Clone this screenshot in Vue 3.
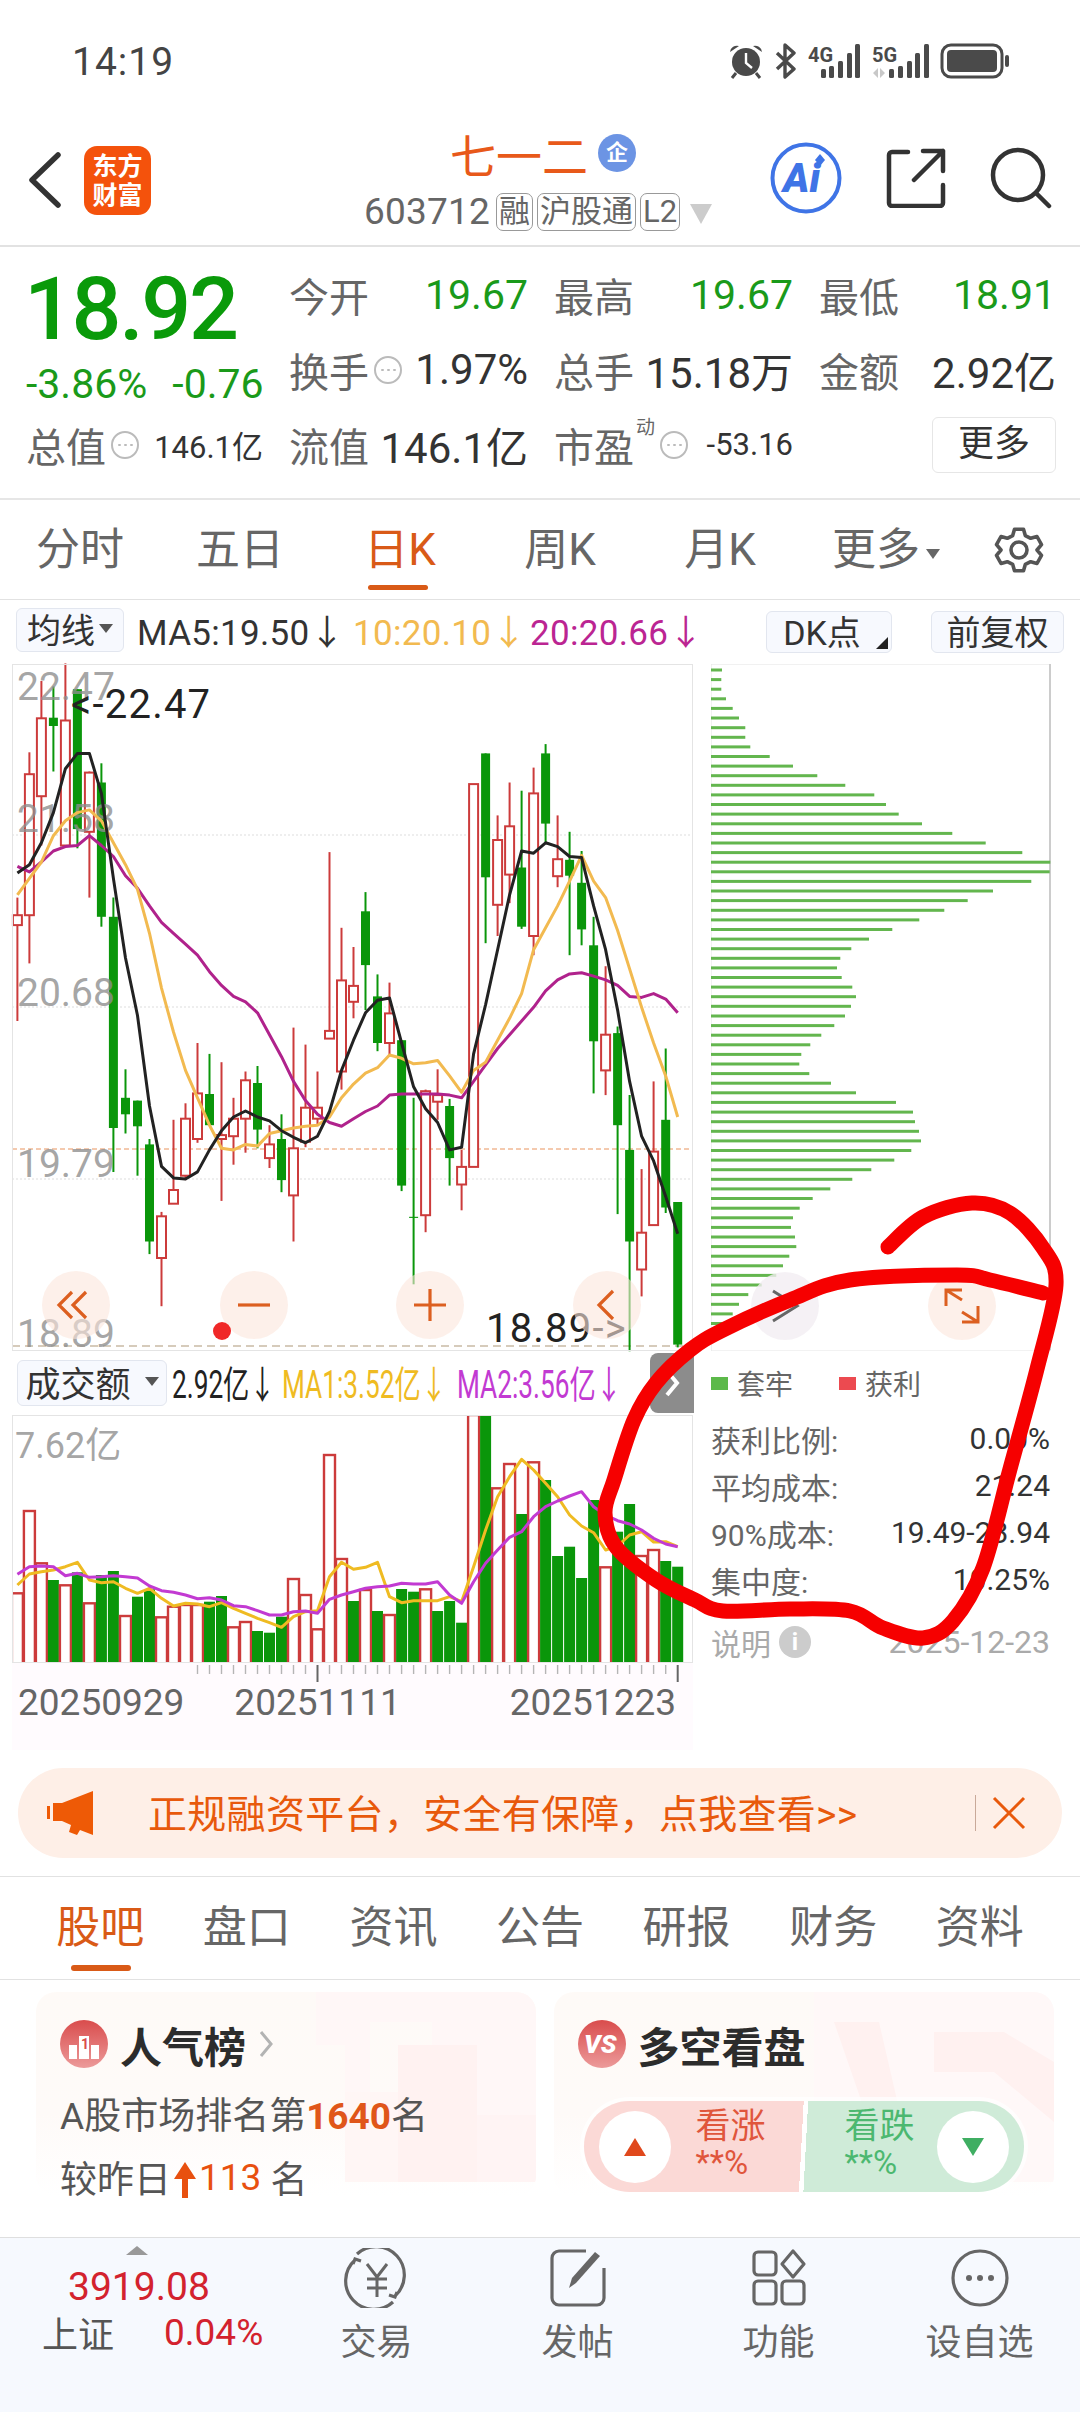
<template>
  <div class="page">
    <!-- status bar -->
    <div class="status">
      <span class="clock">14:19</span>
      <div class="status-icons">
        <svg width="36" height="36" viewBox="0 0 36 36">
          <circle cx="18" cy="19" r="14" fill="#4a4a4a" />
          <path d="M18 10v10l6 5" fill="none" stroke="#fff" stroke-width="2.4" />
          <path d="M2 9a7 7 0 0 1 9-6zM34 9a7 7 0 0 0-9-6z" fill="#4a4a4a" />
          <path d="M8 30l-4 5M28 30l4 5" stroke="#4a4a4a" stroke-width="3" />
        </svg>
        <svg width="24" height="36" viewBox="0 0 24 36">
          <path d="M3 10l17 16-9 8V2l9 8L3 26" fill="none" stroke="#4a4a4a" stroke-width="3.4" stroke-linejoin="round" />
        </svg>
        <svg width="54" height="36" viewBox="0 0 54 36">
          <text x="0" y="19" class="net">4G</text>
          <rect x="13" y="26" width="5" height="9" rx="1.5" fill="#4a4a4a" />
          <rect x="21" y="23" width="5" height="12" rx="1.5" fill="#4a4a4a" />
          <rect x="30" y="18" width="5" height="17" rx="1.5" fill="#4a4a4a" />
          <rect x="39" y="10" width="5" height="25" rx="1.5" fill="#4a4a4a" />
          <rect x="47" y="1" width="5" height="34" rx="1.5" fill="#4a4a4a" />
        </svg>
        <svg width="58" height="36" viewBox="0 0 58 36">
          <text x="0" y="19" class="net">5G</text>
          <path d="M1 30l5-5v10zM8 25l5 5-5 5z" fill="#c8c8c8" />
          <rect x="17" y="26" width="5" height="9" rx="1.5" fill="#4a4a4a" />
          <rect x="26" y="23" width="5" height="12" rx="1.5" fill="#4a4a4a" />
          <rect x="35" y="18" width="5" height="17" rx="1.5" fill="#4a4a4a" />
          <rect x="43" y="10" width="5" height="25" rx="1.5" fill="#4a4a4a" />
          <rect x="52" y="1" width="5" height="34" rx="1.5" fill="#4a4a4a" />
        </svg>
        <svg width="70" height="36" viewBox="0 0 70 36">
          <rect x="2" y="2" width="60" height="32" rx="9" fill="none" stroke="#4a4a4a" stroke-width="3" />
          <rect x="7" y="7" width="50" height="22" rx="4" fill="#4a4a4a" />
          <rect x="65" y="12" width="4" height="12" rx="2" fill="#4a4a4a" />
        </svg>
      </div>
    </div>

    <!-- title bar -->
    <div class="topbar">
      <svg class="back" width="34" height="56" viewBox="0 0 34 56">
        <path d="M30 3L4 28l26 25" fill="none" stroke="#333" stroke-width="5.5" stroke-linecap="round" stroke-linejoin="round" />
      </svg>
      <div class="logo"><span>东方</span><span>财富</span></div>
      <div class="stock">
        <div class="stock-name">
          <span>七一二</span><i class="qi">企</i>
        </div>
        <div class="stock-code">
          <span class="code">603712</span>
          <span class="tag">融</span>
          <span class="tag">沪股通</span>
          <span class="tag">L2</span>
          <b class="drop"></b>
        </div>
      </div>
      <div class="top-actions">
        <svg width="72" height="72" viewBox="0 0 72 72">
          <circle cx="36" cy="36" r="33.5" fill="none" stroke="#3f74e6" stroke-width="4" />
          <text x="13" y="50" class="ai">Ai</text>
          <path d="M50 12l5 6-5 6-5-6z" fill="#3f74e6" />
        </svg>
        <svg width="60" height="60" viewBox="0 0 60 60">
          <path d="M22 4H6a3 3 0 0 0-3 3v48a3 3 0 0 0 3 3h48a3 3 0 0 0 3-3V37M37 3h20v20M57 3L28 32" fill="none" stroke="#333" stroke-width="4.5" stroke-linecap="round" stroke-linejoin="round" />
        </svg>
        <svg width="62" height="62" viewBox="0 0 62 62">
          <circle cx="28" cy="28" r="25" fill="none" stroke="#333" stroke-width="4.5" />
          <path d="M46 46l13 13" stroke="#333" stroke-width="4.5" stroke-linecap="round" />
        </svg>
      </div>
    </div>

    <!-- quote -->
    <div class="quote">
      <div class="price-box">
        <div class="price">18.92</div>
        <div class="change"><span>-3.86%</span><span>-0.76</span></div>
      </div>
      <div class="cell"><span class="lab">今开</span><span class="val down">19.67</span></div>
      <div class="cell"><span class="lab">最高</span><span class="val down">19.67</span></div>
      <div class="cell"><span class="lab">最低</span><span class="val down">18.91</span></div>
      <div class="cell">
        <span class="lab">换手<svg class="dots" viewBox="0 0 30 30"><circle cx="15" cy="15" r="13" /><path d="M9 15h1M15 15h1M21 15h1" /></svg></span>
        <span class="val big">1.97%</span>
      </div>
      <div class="cell"><span class="lab">总手</span><span class="val big">15.18万</span></div>
      <div class="cell"><span class="lab">金额</span><span class="val big">2.92亿</span></div>
      <div class="cell">
        <span class="lab">总值<svg class="dots" viewBox="0 0 30 30"><circle cx="15" cy="15" r="13" /><path d="M9 15h1M15 15h1M21 15h1" /></svg></span>
        <span class="val small">146.1亿</span>
      </div>
      <div class="cell"><span class="lab">流值</span><span class="val big">146.1亿</span></div>
      <div class="cell">
        <span class="lab">市盈<sup>动</sup><svg class="dots" viewBox="0 0 30 30"><circle cx="15" cy="15" r="13" /><path d="M9 15h1M15 15h1M21 15h1" /></svg></span>
        <span class="val small">-53.16</span>
      </div>
      <div class="cell right"><span class="more-btn">更多</span></div>
    </div>

    <!-- period tabs -->
    <div class="periods">
      <span v-for="p in periods" :key="p" class="period" :class="{ on: p === '日K' }">{{ p }}</span>
      <span class="period more">更多<b class="caret"></b></span>
      <svg class="gear" width="52" height="52" viewBox="0 0 52 52">
        <path d="M21 3h10l2 7 6 3 7-2 5 9-5 6 5 6-5 9-7-2-6 3-2 7H21l-2-7-6-3-7 2-5-9 5-6-5-6 5-9 7 2 6-3z" transform="translate(2.6 2.6) scale(.9)" fill="none" stroke="#555" stroke-width="4" stroke-linejoin="round" />
        <circle cx="26" cy="26" r="8" fill="none" stroke="#555" stroke-width="3.6" />
      </svg>
    </div>

    <!-- indicator row -->
    <div class="indicators">
      <span class="chip wide">均线<b class="tri"></b></span>
      <span class="ma ma5">MA5:19.50↓</span>
      <span class="ma ma10">10:20.10↓</span>
      <span class="ma ma20">20:20.66↓</span>
      <span class="chip dk">DK点<b class="corner"></b></span>
      <span class="chip fq">前复权</span>
    </div>

    <!-- charts -->
    <div class="charts">
      <div class="left-col">
        <svg class="kline" width="681" height="687" viewBox="0 0 681 687">
          <line v-for="g in grids" :key="g" x1="0" x2="681" :y1="g" :y2="g" stroke="#ddd" stroke-dasharray="2 2" />
          <line x1="0" x2="681" y1="485" y2="485" stroke="#e9945f" stroke-dasharray="5 3" />
          <line x1="0" x2="681" y1="682" y2="682" stroke="#c9bba5" stroke-dasharray="8 5" stroke-width="1.5" />
          <g v-for="c in candles" :key="c.x">
            <line :x1="c.x" :x2="c.x" :y1="c.wt" :y2="c.wb" :stroke="c.color" stroke-width="2" />
            <rect :x="c.x - 4.5" :y="c.bt" width="9" :height="c.bh" :fill="c.up ? '#fff' : c.color" :stroke="c.color" :stroke-width="c.up ? 2 : 0" />
          </g>
          <text v-for="l in axisLabels" :key="l.t" x="5" :y="l.y" class="axis-txt">{{ l.t }}</text>
          <polyline :points="ma20" fill="none" stroke="#b0228c" stroke-width="3" stroke-linejoin="round" />
          <polyline :points="ma10" fill="none" stroke="#f2ba50" stroke-width="3" stroke-linejoin="round" />
          <polyline :points="ma5" fill="none" stroke="#222" stroke-width="3" stroke-linejoin="round" />
          <text x="59" y="54" class="mark-txt">&lt;-22.47</text>
          <text x="474" y="678" class="mark-txt">18.89-&gt;</text>
          <g fill="#fbe6dc" fill-opacity=".6">
            <circle cx="64" cy="641" r="34" />
            <circle cx="242" cy="641" r="34" />
            <circle cx="418" cy="641" r="34" />
            <circle cx="595" cy="641" r="34" />
          </g>
          <g fill="none" stroke="#dc5f20" stroke-width="3.2">
            <path d="M60 628l-13 13 13 13M74 628l-13 13 13 13" />
            <path d="M226 641h32" />
            <path d="M402 641h32M418 625v32" />
            <path d="M601 627l-14 14 14 14" />
          </g>
          <circle cx="210" cy="667" r="9" fill="#f02828" />
        </svg>

        <div class="vol-head">
          <span class="chip vol-chip">成交额<b class="tri"></b></span>
          <span class="vol-val w1">2.92亿↓</span>
          <span class="vol-val w2 ma1">MA1:3.52亿↓</span>
          <span class="vol-val w2 ma2">MA2:3.56亿↓</span>
          <span class="handle">
            <svg width="16" height="30" viewBox="0 0 16 30"><path d="M3 3l10 12L3 27" fill="none" stroke="#fff" stroke-width="4" /></svg>
          </span>
        </div>

        <svg class="volume" width="681" height="248" viewBox="0 0 681 248">
          <text x="3" y="43" class="axis-txt vol-txt">7.62亿</text>
          <rect v-for="b in volBars" :key="b.x" :x="b.x - 5.5" :y="b.y" width="11" :height="b.h" :fill="b.up ? '#fff' : '#0a960a'" :stroke="b.up ? '#cc3b3b' : 'none'" :stroke-width="b.up ? 2.4 : 0" />
          <polyline :points="volMa1" fill="none" stroke="#efbb22" stroke-width="3" stroke-linejoin="round" />
          <polyline :points="volMa2" fill="none" stroke="#c23ad2" stroke-width="3" stroke-linejoin="round" />
        </svg>

        <div class="date-axis">
          <svg width="681" height="20" viewBox="0 0 681 20">
            <line v-for="t in ticks" :key="t.x" :x1="t.x" :x2="t.x" y1="2" :y2="t.big ? 19 : 11" :stroke="t.big ? '#666' : '#b5b5b5'" :stroke-width="t.big ? 2 : 1.4" />
          </svg>
          <div class="dates"><span>20250929</span><span>20251111</span><span>20251223</span></div>
        </div>
      </div>

      <div class="right-col">
        <svg class="chips" width="340" height="687" viewBox="0 0 340 687">
          <rect x="0" y="0" width="339" height="687" fill="none" stroke="#e4e4e4" />
          <line x1="339" x2="339" y1="0" y2="686" stroke="#ccc" stroke-width="2" />
          <rect v-for="b in chipBars" :key="b.y" x="0" :y="b.y" :width="b.w" height="3" fill="#63b64e" />
          <circle cx="74" cy="642" r="34" fill="#f3eef3" fill-opacity=".8" />
          <circle cx="251" cy="642" r="34" fill="#fbe6dc" fill-opacity=".6" />
          <path d="M62 627l24 15-24 15" fill="none" stroke="#666" stroke-width="3" />
          <path d="M235 642v-16h16M235 626l16 10M267 642v16h-16M267 658l-16-10" fill="none" stroke="#dc5f20" stroke-width="3" />
        </svg>
        <div class="legend">
          <span class="sq green"></span><span class="lg-t">套牢</span>
          <span class="sq red"></span><span class="lg-t">获利</span>
        </div>
        <div v-for="s in stats" :key="s[0]" class="stat"><span>{{ s[0] }}</span><em>{{ s[1] }}</em></div>
        <div class="stat note">
          <span>说明<i class="info">i</i></span><em>2025-12-23</em>
        </div>
      </div>
    </div>

    <!-- banner -->
    <div class="banner">
      <svg width="46" height="44" viewBox="0 0 46 44">
        <path d="M0 15h3v13H0zM6 12h9L46 0v44l-13-5-3 5-8-3 2-7-9-4H6z" fill="#ee5a06" />
      </svg>
      <span class="banner-text">正规融资平台，安全有保障，点我查看&gt;&gt;</span>
      <i class="sep"></i>
      <svg width="34" height="34" viewBox="0 0 34 34"><path d="M2 2l30 30M32 2L2 32" stroke="#e8590c" stroke-width="3" /></svg>
    </div>

    <!-- news tabs -->
    <div class="news-tabs">
      <span v-for="(t, i) in newsTabs" :key="t" class="news-tab" :class="{ on: i === 0 }">{{ t }}</span>
    </div>

    <!-- cards -->
    <div class="cards">
      <div class="card">
        <svg class="card-bg" width="500" height="204" viewBox="0 0 500 204">
          <path d="M280 0h220v190h-59V123h-45V30h-62v70h-25V53h-29z" fill="#fff7f7" />
          <rect x="362" y="53" width="79" height="137" fill="#fff2f1" />
          <rect x="309" y="100" width="53" height="90" fill="#fff6f5" />
          <rect x="441" y="123" width="59" height="67" fill="#fff4f4" />
        </svg>
        <div class="card-title">
          <svg width="48" height="48" viewBox="0 0 48 48">
            <defs>
              <linearGradient id="ig" x1="0" y1="0" x2="0" y2="1"><stop offset="0" stop-color="#d94c4c" /><stop offset="1" stop-color="#ec9a9a" /></linearGradient>
            </defs>
            <circle cx="24" cy="24" r="24" fill="url(#ig)" />
            <path d="M9 25h8v14H9zM19 16h10v23H19zM31 25h8v14h-8z" fill="#fff" />
            <text x="21" y="29" class="rank">1</text>
          </svg>
          <span>人气榜</span>
          <svg width="16" height="32" viewBox="0 0 16 32"><path d="M3 4l10 12L3 28" fill="none" stroke="#b3b3b3" stroke-width="3" /></svg>
        </div>
        <div class="card-line line1">A股市场排名第<b>1640</b>名</div>
        <div class="card-line line2">
          较昨日<svg width="24" height="36" viewBox="0 0 24 36"><path d="M12 0l11 17h-8v19H9V17H1z" fill="#e8500f" /></svg><b class="thin">113</b>&nbsp;名
        </div>
      </div>
      <div class="card">
        <svg class="card-bg" width="500" height="204" viewBox="0 0 500 204">
          <rect x="260" y="0" width="240" height="190" fill="#fff8f8" />
          <path d="M280 30h45l30 130h-30zM380 40h70l50 30v60l-60-50h-60z" fill="#fff1f0" />
        </svg>
        <div class="card-title">
          <svg width="48" height="48" viewBox="0 0 48 48">
            <circle cx="24" cy="24" r="24" fill="url(#ig)" />
            <text x="6" y="33" class="vs">VS</text>
          </svg>
          <span>多空看盘</span>
        </div>
        <div class="vote">
          <div class="vote-up">
            <span class="disc"><b class="arrow-up"></b></span>
            <div class="vote-txt"><span>看涨</span><small>**%</small></div>
          </div>
          <div class="vote-down">
            <div class="vote-txt"><span>看跌</span><small>**%</small></div>
            <span class="disc"><b class="arrow-down"></b></span>
          </div>
        </div>
      </div>
    </div>

    <!-- bottom bar -->
    <div class="bottom">
      <div class="index">
        <b class="index-tri"></b>
        <div class="index-num">3919.08</div>
        <div class="index-row"><span>上证</span><em>0.04%</em></div>
      </div>
      <div class="tool">
        <svg width="68" height="60" viewBox="0 0 68 60">
          <path d="M14 6A28 28 0 0 1 52 48M54 44l-2 5-6-2M50 54A28 28 0 0 1 12 12M10 16l2-5 6 2" fill="none" stroke="#666" stroke-width="3.2" />
          <path d="M24 16l10 13 10-13M34 29v20M24 31h20M24 40h20" fill="none" stroke="#666" stroke-width="3" />
        </svg>
        <span>交易</span>
      </div>
      <div class="tool">
        <svg width="60" height="60" viewBox="0 0 60 60">
          <path d="M38 3H11a7 7 0 0 0-7 7v40a7 7 0 0 0 7 7h38a7 7 0 0 0 7-7V20" fill="none" stroke="#666" stroke-width="3.2" />
          <path d="M21 40l3-10L47 4l5 4-24 27z" fill="#666" />
        </svg>
        <span>发帖</span>
      </div>
      <div class="tool">
        <svg width="60" height="60" viewBox="0 0 60 60">
          <g fill="none" stroke="#666" stroke-width="3.2">
            <rect x="5" y="4" width="22" height="23" rx="4" />
            <rect x="5" y="33" width="22" height="23" rx="4" />
            <rect x="33" y="33" width="22" height="23" rx="4" />
            <path d="M44 3l11 13-11 13-11-13z" stroke-linejoin="round" />
          </g>
        </svg>
        <span>功能</span>
      </div>
      <div class="tool">
        <svg width="60" height="60" viewBox="0 0 60 60">
          <circle cx="30" cy="30" r="27" fill="none" stroke="#666" stroke-width="3.2" />
          <circle cx="19" cy="30" r="3" fill="#666" />
          <circle cx="30" cy="30" r="3" fill="#666" />
          <circle cx="41" cy="30" r="3" fill="#666" />
        </svg>
        <span>设自选</span>
      </div>
    </div>

    <!-- hand drawn mark on top of the screenshot -->
    <svg class="scribble" width="1080" height="2412" viewBox="0 0 1080 2412">
      <path :d="scribble" fill="none" stroke="#f60000" stroke-width="15" stroke-linecap="round" stroke-linejoin="round" />
    </svg>
  </div>
</template>

<script setup>
const periods = ['分时', '五日', '日K', '周K', '月K']
const newsTabs = ['股吧', '盘口', '资讯', '公告', '研报', '财务', '资料']
const stats = [
  ['获利比例:', '0.00%'],
  ['平均成本:', '21.24'],
  ['90%成本:', '19.49-23.94'],
  ['集中度:', '10.25%'],
]
const grids = [171, 343, 515]
const axisLabels = [
  { t: '22.47', y: 36 },
  { t: '21.58', y: 168 },
  { t: '20.68', y: 342 },
  { t: '19.79', y: 513 },
  { t: '18.89', y: 683 },
]

// sampled from the chart, x in slots, y in 1568-tall units
const rawCandles = [
  ['r',725,757,775,950],['r',460,500,757,845],['r',330,398,540,630],['g',340,397,412,495],
  ['r',298,402,630,632],['g',345,345,600,635],['r',495,497,605,725],['g',480,515,760,778],
  ['g',725,760,1145,1225],['g',1038,1090,1120,1155],['g',1095,1095,1142,1232],['g',1165,1175,1352,1375],
  ['r',1298,1306,1382,1470],['r',1130,1258,1283,1283],['r',1100,1128,1232,1240],['r',990,1082,1165,1172],
  ['g',1010,1083,1140,1140],['r',1025,1158,1165,1278],['r',1090,1128,1160,1212],['r',1042,1058,1128,1190],
  ['g',1032,1063,1148,1182],['r',1140,1175,1200,1218],['g',1120,1165,1240,1262],['r',962,1182,1268,1352],
  ['r',993,1108,1170,1180],['r',1042,1108,1128,1140],['r',642,968,982,982],['r',780,876,1042,1075],
  ['r',815,886,915,945],['g',715,750,848,930],['g',865,905,990,1005],['r',880,936,990,1015],
  ['g',985,985,1250,1260],['g',1090,1307,1309,1430],['r',1075,1078,1304,1335],['r',1038,1085,1097,1130],
  ['g',1092,1105,1200,1250],['r',1185,1216,1248,1295],['r',518,518,1216,1216],['g',462,462,688,808],
  ['r',575,620,738,795],['r',515,595,683,735],['g',530,670,778,782],['r',488,535,795,830],
  ['g',445,462,590,625],['r',575,655,686,706],['g',605,656,685,830],['g',640,698,783,812],
  ['g',760,812,987,1082],['r',850,975,1040,1085],['g',960,972,1140,1302],['g',1085,1185,1352,1552],
  ['r',1220,1336,1403,1452],['r',1060,1188,1322,1322],['g',1000,1130,1290,1300],['g',1280,1280,1540,1545],
]
const rawMa5 = [680,665,625,570,490,462,462,535,690,835,940,1105,1215,1236,1238,1225,1185,1150,1125,1114,1125,1132,1150,1162,1172,1160,1115,1040,985,935,912,908,990,1070,1110,1135,1185,1180,1010,920,820,720,640,644,625,632,650,652,740,820,930,1060,1160,1205,1270,1338]
const rawMa10 = [720,690,660,612,585,570,565,585,625,665,710,790,890,970,1040,1090,1140,1182,1185,1175,1178,1155,1150,1145,1142,1140,1125,1090,1065,1045,1035,1012,1018,1028,1026,1022,1050,1080,1040,1025,985,945,900,820,780,740,695,648,695,725,785,855,925,990,1050,1125]
const rawMa20 = [668,678,660,640,632,630,612,630,650,685,708,740,770,790,810,830,860,885,905,915,935,975,1015,1060,1095,1120,1135,1142,1128,1115,1105,1085,1083,1083,1083,1083,1085,1090,1060,1030,1000,975,950,925,895,875,864,862,868,875,885,905,907,900,910,935]

const slotX = (i) => (39 + i * 26.89) / 2.24 - 12
const kY = (v) => +(v / 1.8233 - 164).toFixed(1)
const line = (arr, fy) => arr.map((v, i) => `${slotX(i).toFixed(1)},${fy(v)}`).join(' ')

const candles = rawCandles.map((c, i) => ({
  x: +slotX(i).toFixed(1),
  up: c[0] === 'r',
  color: c[0] === 'r' ? '#cc3b3b' : '#0a960a',
  wt: kY(c[1]),
  bt: kY(c[2]),
  bh: Math.max(kY(c[3]) - kY(c[2]), 1),
  wb: kY(c[4]),
}))
const ma5 = line(rawMa5, kY)
const ma10 = line(rawMa10, kY)
const ma20 = line(rawMa20, kY)

// volume panel
const rawVol = [
  ['r',760],['r',513],['r',670],['g',720],['r',736],['g',697],['r',790],['g',705],['g',693],['r',828],
  ['g',770],['g',748],['r',832],['r',800],['r',795],['r',795],['g',785],['g',768],['r',862],['r',846],
  ['g',873],['g',878],['g',830],['r',717],['r',765],['r',868],['r',345],['r',657],['g',783],['r',750],
  ['g',813],['r',825],['g',747],['g',755],['r',748],['g',813],['g',783],['g',848],['r',225],['g',228],
  ['r',445],['r',372],['g',522],['r',367],['g',420],['g',648],['g',620],['g',714],['g',480],['r',682],
  ['g',575],['g',492],['r',648],['r',630],['g',663],['g',680],
]
const rawMa1 = [735,702,695,690,680,667,720,728,725,745,760,745,775,798,790,792,800,788,805,820,835,848,862,830,815,812,710,667,688,682,667,770,788,782,782,782,770,785,680,570,470,410,358,390,430,470,525,558,578,630,618,585,575,606,605,620]
const rawMa2 = [703,680,678,680,707,700,712,710,707,710,714,738,752,757,765,776,773,780,797,800,812,825,825,815,813,820,778,765,755,745,740,738,730,732,732,725,765,790,725,670,630,592,575,530,500,483,468,455,500,525,542,552,570,595,612,620]
const vY = (v) => +(v / 3 - 75).toFixed(1)
const volBars = rawVol.map((b, i) => ({
  x: +slotX(i).toFixed(1),
  up: b[0] === 'r',
  y: vY(b[1]),
  h: +(vY(970) - vY(b[1])).toFixed(1),
}))
const volMa1 = line(rawMa1, vY)
const volMa2 = line(rawMa2, vY)
const ticks = rawVol.map((_, i) => ({ x: +slotX(i).toFixed(1), big: i === 25 || i === 55 })).filter((t, i) => i >= 15)

// chip distribution, bar right ends
const rawChips = [95,93,93,107,127,146,165,165,180,238,308,381,465,552,587,625,695,786,886,996,1080,1078,1023,908,832,762,687,606,536,483,450,440,454,486,497,482,464,432,393,360,333,327,357,422,497,617,668,674,686,692,663,612,543,486,420,367,328,308,302,314,318,297,278,258,214,174,146,127,110,88]
const chipBars = rawChips.map((e, i) => ({ y: +(4.5 + i * 9.61).toFixed(1), w: +((e - 62) / 3).toFixed(1) }))

// catmull-rom through the drawn points
const pts = [[888,1247],[923,1217],[972,1203],[1010,1213],[1043,1248],[1056,1285],[1037,1369],[1010,1469],[983,1568],[953,1621],[923,1638],[883,1628],[850,1611],[790,1609],[723,1611],[695,1600],[656,1580],[616,1547],[605,1513],[614,1480],[634,1420],[656,1383],[690,1350],[723,1330],[790,1300],[850,1280],[957,1275],[990,1280],[1043,1293]]
let d = `M${pts[0][0]} ${pts[0][1]}`
for (let i = 0; i < pts.length - 1; i++) {
  const p0 = pts[Math.max(i - 1, 0)]
  const p1 = pts[i]
  const p2 = pts[i + 1]
  const p3 = pts[Math.min(i + 2, pts.length - 1)]
  d += ` C${p1[0] + (p2[0] - p0[0]) / 6} ${p1[1] + (p2[1] - p0[1]) / 6} ${p2[0] - (p3[0] - p1[0]) / 6} ${p2[1] - (p3[1] - p1[1]) / 6} ${p2[0]} ${p2[1]}`
}
const scribble = d
</script>

<style>
html,
body {
  margin: 0;
  background: #fff;
}
</style>

<style scoped>
.page {
  position: relative;
  width: 1080px;
  height: 2412px;
  overflow: hidden;
  background: #fff;
  display: flex;
  flex-direction: column;
  font-family: Roboto, "Noto Sans CJK SC", sans-serif;
  color: #333;
}

.status {
  height: 100px;
  padding: 43px 70px 0 72px;
  box-sizing: border-box;
  display: flex;
  justify-content: space-between;
  align-items: flex-start;
}
.clock {
  font-size: 39px;
  line-height: 38px;
  color: #444;
  letter-spacing: 1px;
}
.status-icons {
  display: flex;
  gap: 10px;
  align-items: center;
}
.net {
  font-size: 20px;
  font-weight: 700;
  fill: #4a4a4a;
}

.topbar {
  height: 147px;
  box-sizing: border-box;
  border-bottom: 2px solid #e2e2e2;
  padding-left: 28px;
  display: flex;
  align-items: flex-start;
}
.back {
  margin-top: 52px;
}
.logo {
  width: 67px;
  height: 69px;
  margin: 46px 0 0 22px;
  background: #f4520c;
  border-radius: 13px;
  color: #fff;
  font-size: 25px;
  line-height: 29px;
  font-weight: 700;
  display: flex;
  flex-direction: column;
  align-items: center;
  justify-content: center;
}
.stock {
  margin-left: 213px;
  width: 350px;
}
.stock-name {
  display: flex;
  justify-content: center;
  align-items: center;
  height: 70px;
  padding-top: 36px;
  box-sizing: border-box;
  gap: 10px;
  padding-left: 8px;
  color: #e8591a;
  font-size: 46px;
}
.qi {
  width: 38px;
  height: 38px;
  border-radius: 50%;
  background: #6c94e4;
  color: #fff;
  font-size: 22px;
  font-style: normal;
  font-weight: 700;
  text-align: center;
  line-height: 38px;
}
.stock-code {
  display: flex;
  align-items: center;
  gap: 4px;
  margin-top: 22px;
  color: #666;
  white-space: nowrap;
}
.code {
  font-size: 37px;
  line-height: 40px;
  letter-spacing: 0.2px;
  margin-right: 2px;
}
.tag {
  border: 1px solid #999;
  border-radius: 7px;
  font-size: 31px;
  line-height: 36px;
  height: 36px;
  padding: 0 2px;
  color: #666;
}
.drop {
  width: 0;
  height: 0;
  margin-left: 6px;
  margin-top: 4px;
  border-left: 11px solid transparent;
  border-right: 11px solid transparent;
  border-top: 20px solid #ccc;
}
.top-actions {
  margin-left: auto;
  display: flex;
  align-items: center;
  padding: 42px 28px 0 0;
  gap: 44px;
}
.ai {
  font-size: 40px;
  font-weight: 900;
  font-style: italic;
  fill: #3f74e6;
}

.quote {
  height: 253px;
  box-sizing: border-box;
  border-bottom: 2px solid #e6e6e6;
  padding: 10px 0 0 26px;
  display: grid;
  grid-template-columns: 237px 239px 239px 237px;
  grid-auto-rows: 75px;
  column-gap: 26px;
}
.price-box {
  grid-row: span 2;
  display: flex;
  flex-direction: column;
}
.price {
  font-size: 88px;
  line-height: 100px;
  margin: 2px 0 0 -2px;
  font-weight: 500;
  color: #0a9a0a;
  letter-spacing: -2.4px;
}
.change {
  display: flex;
  gap: 25px;
  font-size: 41px;
  line-height: 46px;
  margin-top: 2px;
  color: #1a9a1a;
  white-space: nowrap;
}
.cell {
  display: flex;
  justify-content: space-between;
  align-items: center;
}
.cell.right {
  justify-content: flex-end;
}
.lab {
  display: flex;
  align-items: center;
  font-size: 40px;
  color: #666;
  white-space: nowrap;
}
.lab sup {
  font-size: 19px;
  line-height: 20px;
  margin: -34px 0 0 2px;
}
.val {
  font-size: 41px;
  white-space: nowrap;
}
.val.down {
  color: #1a9a1a;
}
.val.big {
  font-size: 42px;
  color: #333;
}
.val.small {
  font-size: 31px;
  color: #333;
}
.dots {
  width: 30px;
  height: 30px;
  margin-left: 4px;
  fill: none;
  stroke: #bbb;
  stroke-width: 2;
  stroke-linecap: round;
}
.more-btn {
  width: 124px;
  height: 56px;
  box-sizing: border-box;
  border: 1px solid #e6e6e6;
  border-radius: 6px;
  font-size: 36px;
  line-height: 52px;
  text-align: center;
  color: #333;
}

.periods {
  height: 100px;
  box-sizing: border-box;
  border-bottom: 1px solid #e2e2e2;
  display: flex;
  align-items: center;
  position: relative;
}
.period {
  position: relative;
  width: 160px;
  text-align: center;
  font-size: 44px;
  color: #666;
  line-height: 98px;
  height: 98px;
  flex: none;
  box-sizing: border-box;
}
.period.more {
  padding-left: 12px;
}
.period.on {
  color: #d95a17;
}
.period.on::after {
  content: "";
  position: absolute;
  left: 48px;
  right: 52px;
  bottom: 9px;
  height: 5px;
  border-radius: 3px;
  background: #d95a17;
}
.caret {
  display: inline-block;
  margin-left: 6px;
  vertical-align: 6px;
  border-left: 7px solid transparent;
  border-right: 7px solid transparent;
  border-top: 10px solid #666;
}
.gear {
  margin-left: 33px;
}

.indicators {
  height: 64px;
  display: flex;
  align-items: center;
  position: relative;
  padding-left: 16px;
  box-sizing: border-box;
  white-space: nowrap;
}
.chip {
  display: flex;
  align-items: center;
  justify-content: center;
  box-sizing: border-box;
  height: 44px;
  padding-bottom: 3px;
  background: #f7f9fe;
  border: 1px solid #e2e6ef;
  border-radius: 6px;
  font-size: 34px;
  color: #333;
  position: relative;
}
.chip.wide {
  width: 108px;
  margin-bottom: 4px;
}
.tri {
  margin-left: 4px;
  border-left: 7px solid transparent;
  border-right: 7px solid transparent;
  border-top: 9px solid #555;
}
.ma {
  font-size: 35px;
  letter-spacing: 0.3px;
  margin-bottom: 6px;
}
.ma5 {
  margin-left: 13px;
  color: #333;
  width: 216px;
}
.ma10 {
  color: #f2ba50;
  width: 177px;
}
.ma20 {
  color: #bb2592;
  width: 236px;
}
.chip.dk {
  width: 126px;
  height: 42px;
  padding-right: 14px;
}
.corner {
  position: absolute;
  right: 3px;
  bottom: 3px;
  border-left: 12px solid transparent;
  border-bottom: 12px solid #222;
}
.chip.fq {
  width: 133px;
  height: 42px;
  margin-left: 39px;
}

.charts {
  display: flex;
  height: 1086px;
  padding-left: 12px;
}
.left-col {
  width: 681px;
  flex: none;
  display: flex;
  flex-direction: column;
}
.kline {
  display: block;
  border: 0;
  outline: 1px solid #e4e4e4;
  outline-offset: -1px;
  overflow: visible;
}
.axis-txt {
  font-size: 39px;
  fill: #8e8e8e;
  fill-opacity: 0.8;
}
.mark-txt {
  font-size: 40px;
  letter-spacing: 1.2px;
  fill: #222;
}
.vol-head {
  height: 64px;
  display: flex;
  align-items: center;
  position: relative;
  padding-left: 5px;
  white-space: nowrap;
}
.vol-chip {
  width: 150px;
  height: 46px;
  flex: none;
  margin-right: 5px;
  font-size: 35px;
}
.vol-chip .tri {
  margin-left: 14px;
}
.vol-val {
  display: block;
  font-size: 38px;
  flex: none;
  transform: scaleX(0.69);
  transform-origin: left center;
  color: #222;
  margin-bottom: 4px;
}
.w1 {
  width: 110px;
}
.w2 {
  width: 175px;
}
.ma1 {
  color: #efbb22;
}
.ma2 {
  color: #c23ad2;
}
.handle {
  position: absolute;
  right: -1px;
  top: 2px;
  width: 44px;
  height: 60px;
  box-sizing: border-box;
  background: #8c8c8c;
  border-radius: 8px 0 0 8px;
  display: flex;
  align-items: center;
  justify-content: center;
}
.volume {
  display: block;
  outline: 1px solid #e4e4e4;
  outline-offset: -1px;
}
.vol-txt {
  font-size: 36px;
}
.date-axis {
  height: 87px;
  background: #fffbfe;
}
.date-axis svg {
  display: block;
}
.dates {
  display: flex;
  font-size: 37px;
  line-height: 40px;
  color: #666;
  padding-left: 6px;
  gap: 50px;
}
.dates span:last-child {
  margin-left: 59px;
}

.right-col {
  width: 340px;
  margin-left: 18px;
  flex: none;
}
.chips {
  display: block;
}
.legend {
  display: flex;
  align-items: center;
  height: 64px;
  font-size: 28px;
  color: #666;
}
.sq {
  width: 17px;
  height: 13px;
  margin-right: 9px;
}
.sq.green {
  background: #5cb94a;
}
.sq.red {
  background: #ec4a50;
}
.lg-t {
  width: 102px;
}
.stat {
  display: flex;
  justify-content: space-between;
  align-items: center;
  height: 47px;
  font-size: 30px;
  color: #666;
  padding-right: 1px;
}
.stat em {
  font-style: normal;
  font-size: 30px;
  color: #333;
}
.stat.note {
  height: 60px;
  margin-top: 9px;
  color: #aaa;
}
.stat.note em {
  font-size: 32px;
  color: #aaa;
}
.note span {
  display: flex;
  align-items: center;
}
.info {
  width: 32px;
  height: 32px;
  margin-left: 8px;
  border-radius: 50%;
  background: #ccc;
  color: #fff;
  font-size: 24px;
  font-style: normal;
  font-weight: 700;
  text-align: center;
  line-height: 32px;
}

.banner {
  margin: 18px 18px 0;
  height: 90px;
  border-radius: 45px;
  background: #feefe7;
  display: flex;
  align-items: center;
  padding-left: 29px;
  flex: none;
}
.banner-text {
  margin-left: 55px;
  font-size: 39px;
  color: #e8590c;
  white-space: nowrap;
  width: 720px;
  letter-spacing: 0.3px;
  padding-bottom: 5px;
}
.sep {
  width: 1px;
  height: 36px;
  background: #c9a999;
  margin: 0 16px 0 107px;
}

.news-tabs {
  margin-top: 18px;
  height: 104px;
  box-sizing: border-box;
  border-top: 1px solid #e2e2e2;
  border-bottom: 1px solid #e2e2e2;
  display: flex;
  padding: 0 27px;
  flex: none;
}
.news-tab {
  position: relative;
  width: 146.6px;
  text-align: center;
  font-size: 44px;
  line-height: 102px;
  color: #666;
}
.news-tab.on {
  color: #d95a17;
}
.news-tab.on::after {
  content: "";
  position: absolute;
  left: 44px;
  width: 60px;
  bottom: 8px;
  height: 6px;
  border-radius: 3px;
  background: #d95a17;
}

.cards {
  height: 257px;
  display: flex;
  gap: 18px;
  padding: 12px 27px 0 36px;
  box-sizing: border-box;
  flex: none;
}
.card {
  position: relative;
  flex: 1;
  height: 204px;
  border-radius: 20px;
  padding: 28px 0 0 24px;
  box-sizing: border-box;
  background: linear-gradient(180deg, #fefaf7 0, #fefaf8 60%, #fff 100%);
}
.card-bg {
  position: absolute;
  left: 0;
  top: 0;
  border-radius: 20px;
}
.card-title,
.card-line,
.vote {
  position: relative;
}
.card-title {
  display: flex;
  align-items: center;
  gap: 12px;
  font-size: 42px;
  font-weight: 700;
  color: #2c2c2c;
  height: 48px;
}
.rank {
  font-size: 14px;
  font-weight: 700;
  fill: #d94c4c;
}
.vs {
  font-size: 26px;
  font-weight: 900;
  font-style: italic;
  fill: #fff;
}
.card-line {
  font-size: 37px;
  color: #555;
  white-space: nowrap;
}
.line1 {
  margin-top: 18px;
}
.line1 b {
  color: #e0561a;
  font-weight: 700;
}
.line2 {
  margin-top: 10px;
  display: flex;
  align-items: center;
}
.line2 svg {
  margin: 6px 2px 0;
}
.thin {
  color: #e8500f;
  font-weight: 400;
}
.vote {
  display: flex;
  margin-top: 33px;
  height: 91px;
  width: 440px;
  margin-left: 6px;
  border-radius: 46px;
  box-shadow: 0 0 0 4px rgba(255, 255, 255, 0.7);
  background: linear-gradient(93deg, #fbd9d6 49.4%, #fff 49.4%, #fff 50.4%, #cfebd8 50.4%);
}
.vote-up {
  width: 220px;
  display: flex;
  align-items: center;
  padding-left: 15px;
  box-sizing: border-box;
  gap: 25px;
  color: #e0563c;
}
.vote-down {
  flex: 1;
  display: flex;
  align-items: center;
  justify-content: flex-end;
  padding-right: 15px;
  box-sizing: border-box;
  gap: 22px;
  color: #4cb870;
}
.disc {
  width: 72px;
  height: 72px;
  border-radius: 50%;
  background: #fff;
  display: flex;
  align-items: center;
  justify-content: center;
}
.arrow-up {
  border-left: 11px solid transparent;
  border-right: 11px solid transparent;
  border-bottom: 18px solid #e0481c;
}
.arrow-down {
  border-left: 11px solid transparent;
  border-right: 11px solid transparent;
  border-top: 18px solid #3fae62;
}
.vote-txt {
  display: flex;
  flex-direction: column;
  font-size: 35px;
  line-height: 42px;
  font-weight: 400;
  margin-bottom: 9px;
}
.vote-txt small {
  font-size: 33px;
  line-height: 30px;
}

.bottom {
  flex: 1;
  box-sizing: border-box;
  border-top: 1px solid #dfdfdf;
  background: #f6f9fe;
  display: grid;
  grid-template-columns: 276px repeat(4, 201px);
}
.index {
  position: relative;
  padding: 26px 0 0 42px;
  box-sizing: border-box;
}
.index-tri {
  position: absolute;
  left: 126px;
  top: 8px;
  border-left: 11px solid transparent;
  border-right: 11px solid transparent;
  border-bottom: 9px solid #999;
}
.index-num {
  margin-left: 26px;
  font-size: 39px;
  line-height: 46px;
  color: #d3222e;
}
.index-row {
  display: flex;
  gap: 50px;
  margin-top: -4px;
  align-items: center;
  font-size: 36px;
  color: #555;
}
.index-row em {
  font-style: normal;
  font-size: 37px;
  color: #d3222e;
}
.tool {
  display: flex;
  flex-direction: column;
  align-items: center;
  padding-top: 10px;
  font-size: 36px;
  color: #666;
}
.tool svg {
  margin-bottom: 5px;
}

.scribble {
  position: absolute;
  left: 0;
  top: 0;
  pointer-events: none;
}
</style>
